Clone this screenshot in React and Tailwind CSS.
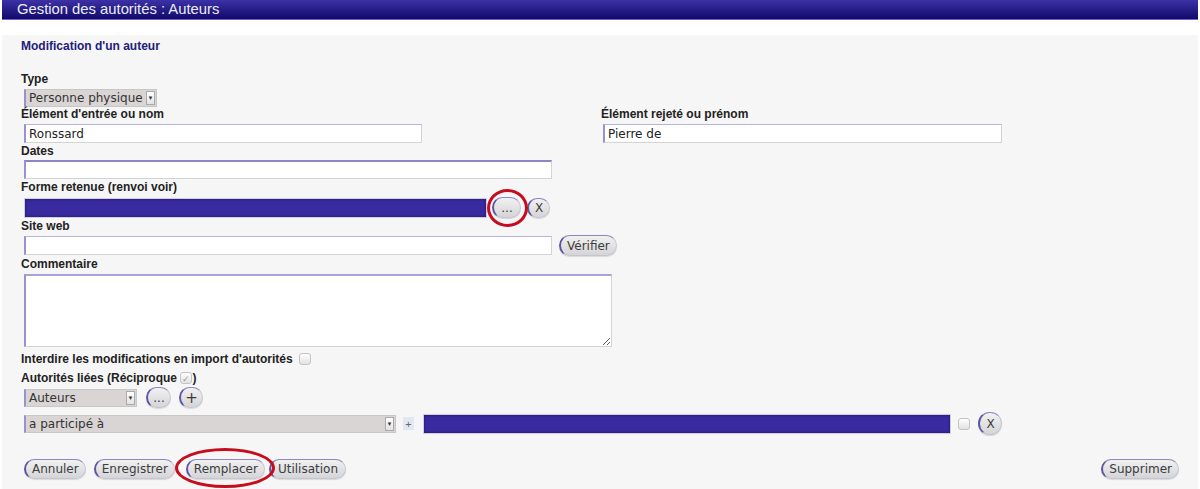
import { useState } from "react";

const sans = "font-['Liberation_Sans',Arial,sans-serif]";
const dv = "font-['DejaVu_Sans',Verdana,sans-serif]";

function Label({ children, className = "" }) {
  return (
    <div
      className={`h-[14px] text-[12px] leading-[14px] font-bold text-[#222] ${sans} ${className}`}
    >
      {children}
    </div>
  );
}

function TextBox({ value = "", width, thickTop = false }) {
  return (
    <input
      type="text"
      defaultValue={value}
      className={`block ${width} h-[19px] bg-white border border-[#d4d4d4] border-l-[2px] border-l-[#9a92cf] ${
        thickTop ? "border-t-[2px] border-t-[#8d85c8]" : "border-t-[#b9b3dd]"
      } px-[3px] text-[12px] text-[#222] outline-none ${dv}`}
    />
  );
}

function PillButton({ children, className = "" }) {
  return (
    <button
      type="button"
      className={`h-[20px] rounded-full border border-[#c5c5d0] border-l-[2px] border-l-[#5d54a3] border-t-[#8c86c2] bg-gradient-to-b from-[#f1f1f1] to-[#d5d5d8] px-[6px] text-[12px] leading-[16px] text-[#3c3c3c] shadow-[0_1px_1px_rgba(0,0,0,0.12)] ${dv} ${className}`}
    >
      {children}
    </button>
  );
}

function SelectBox({ value, width }) {
  return (
    <div
      className={`${width} flex h-[18px] items-stretch border border-[#c9c6c6] border-l-[2px] border-l-[#9a92cf] bg-[#d9d5d5]`}
    >
      <span className={`flex-1 pl-[3px] text-[12px] leading-[16px] text-[#333] ${dv}`}>
        {value}
      </span>
      <span className="my-[1px] mr-[1px] flex w-[9px] items-center justify-center border border-[#aaa] bg-gradient-to-b from-white to-[#e2e2e2] text-[6px] leading-none text-[#333]">
        ▼
      </span>
    </div>
  );
}

function Check({ checked = false }) {
  return (
    <span className="inline-flex h-[12px] w-[12px] items-center justify-center rounded-[3px] border border-[#c4c4c4] bg-gradient-to-b from-white to-[#e2e2e2] text-[9px] leading-none text-[#999]">
      {checked ? "✓" : ""}
    </span>
  );
}

function PurpleBar({ width }) {
  return (
    <div
      className={`${width} h-[20px] border border-[#cfcfe0] bg-[#3a2a9f] shadow-[inset_0_0_3px_rgba(10,0,60,0.6)]`}
    />
  );
}

function RedRing({ className }) {
  return (
    <span
      className={`pointer-events-none absolute rounded-[50%] border-[3px] border-[#c60d1e] ${className}`}
    />
  );
}

export default function App() {
  const [comment, setComment] = useState("");

  return (
    <div className="h-[489px] w-[1200px] overflow-hidden bg-white px-[2px]">
      <div
        className={`h-[20px] border-b border-b-[#6e63c4] bg-gradient-to-b from-[#3d31a6] to-[#12086a] pl-[15px] text-[14.8px] leading-[18px] text-[#ececf4] ${sans}`}
      >
        Gestion des autorités : Auteurs
      </div>

      <div className="mt-[15px] h-[454px] bg-[#f6f6f6] pl-[19px] pt-[5px]">
        <div
          className={`h-[12px] text-[12px] leading-[12px] font-bold text-[#23207a] ${sans}`}
        >
          Modification d'un auteur
        </div>

        <Label className="mt-[20px]">Type</Label>
        <div className="mt-[3px] pl-[3px]">
          <SelectBox value="Personne physique" width="w-[133px]" />
        </div>

        <div className="flex">
          <div className="w-[580px]">
            <Label>Élément d'entrée ou nom</Label>
            <div className="mt-[3px] pl-[3px]">
              <TextBox value="Ronssard" width="w-[398px]" />
            </div>
          </div>
          <div>
            <Label>Élément rejeté ou prénom</Label>
            <div className="mt-[3px] pl-[2px]">
              <TextBox value="Pierre de" width="w-[399px]" />
            </div>
          </div>
        </div>

        <Label className="mt-[1px]">Dates</Label>
        <div className="mt-[2px] pl-[3px]">
          <TextBox width="w-[528px]" thickTop />
        </div>

        <Label className="mt-[1px]">Forme retenue (renvoi voir)</Label>
        <div className="relative mt-[3px] flex h-[21px] items-center gap-[5px] pl-[3px]">
          <PurpleBar width="w-[463px]" />
          <PillButton className="h-[21px] w-[29px] !px-0 text-[10px]">...</PillButton>
          <PillButton className="ml-[1px] w-[23px] !px-0">X</PillButton>
          <RedRing className="left-[466px] top-[-8px] h-[38px] w-[41px]" />
        </div>

        <Label className="mt-[1px]">Site web</Label>
        <div className="mt-[2px] flex h-[21px] items-center gap-[7px] pl-[3px]">
          <TextBox width="w-[528px]" />
          <PillButton className="h-[21px]">Vérifier</PillButton>
        </div>

        <Label className="mt-[1px]">Commentaire</Label>
        <div className="mt-[3px] pl-[3px]">
          <textarea
            value={comment}
            onChange={(e) => setComment(e.target.value)}
            className={`block h-[73px] w-[588px] resize border border-[#d4d4d4] border-l-[2px] border-l-[#9a92cf] border-t-[2px] border-t-[#a9a2d8] bg-white text-[12px] outline-none ${dv}`}
          />
        </div>

        <div className="mt-[5px] flex items-center gap-[6px]">
          <Label>Interdire les modifications en import d'autorités</Label>
          <Check />
        </div>

        <div className="mt-[5px] flex items-center">
          <Label>Autorités liées (Réciproque&nbsp;</Label>
          <Check checked />
          <Label>)</Label>
        </div>

        <div className="mt-[3px] flex h-[19px] items-center pl-[3px]">
          <SelectBox value="Auteurs" width="w-[113px]" />
          <PillButton className="ml-[9px] h-[21px] w-[25px] !px-0 text-[10px]">...</PillButton>
          <PillButton className="ml-[8px] h-[21px] w-[24px] !px-0 text-[15px] leading-[16px]">
            +
          </PillButton>
        </div>

        <div className="mt-[6px] flex h-[21px] items-center pl-[3px]">
          <SelectBox value="a participé à" width="w-[372px]" />
          <span className="ml-[7px] flex h-[13px] w-[11px] items-center justify-center bg-[#e3e8f0] text-[11px] leading-none text-[#666]">
            +
          </span>
          <div className="ml-[9px]">
            <PurpleBar width="w-[528px]" />
          </div>
          <span className="ml-[7px] flex">
            <Check />
          </span>
          <PillButton className="ml-[8px] h-[23px] w-[24px] !px-0">X</PillButton>
        </div>

        <div className="relative mt-[25px] flex h-[20px] items-center pl-[3px] pr-[19px]">
          <PillButton>Annuler</PillButton>
          <PillButton className="ml-[8px]">Enregistrer</PillButton>
          <PillButton className="ml-[11px]">Remplacer</PillButton>
          <PillButton className="ml-[4px] !px-[7px]">Utilisation</PillButton>
          <PillButton className="ml-auto">Supprimer</PillButton>
          <RedRing className="left-[154px] top-[-11px] h-[40px] w-[100px]" />
        </div>
      </div>
    </div>
  );
}
